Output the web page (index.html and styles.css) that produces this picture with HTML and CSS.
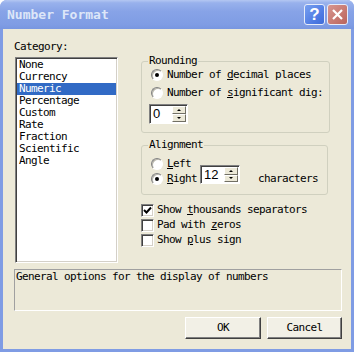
FILE: index.html
```html
<!DOCTYPE html>
<html lang="en">
<head>
  <meta charset="UTF-8" />
  <title>Number Format</title>
  <link rel="stylesheet" href="styles.css">
</head>
<body>
  <div class="window">
    <div class="titlebar">
      <span class="title">Number Format</span>
      <div class="title-buttons">
        <span class="tbtn help">?</span>
        <span class="tbtn close">
          <svg width="13" height="13" viewBox="0 0 13 13"><path d="M2 2 L11 11 M11 2 L2 11" stroke="#fff" stroke-width="2.2" fill="none"/></svg>
        </span>
      </div>
    </div>

    <div class="client">
      <div class="top">
        <div class="category">
          <div class="label">Category:</div>
          <ul class="list">
            <li>None</li>
            <li>Currency</li>
            <li class="selected">Numeric</li>
            <li>Percentage</li>
            <li>Custom</li>
            <li>Rate</li>
            <li>Fraction</li>
            <li>Scientific</li>
            <li>Angle</li>
          </ul>
        </div>

        <div class="options">
          <fieldset class="group rounding">
            <legend>Rounding</legend>
            <div class="radio-row"><span class="radio checked"></span><span>Number of <u>d</u>ecimal places</span></div>
            <div class="radio-row second"><span class="radio"></span><span>Number of <u>s</u>ignificant dig:</span></div>
            <div class="spin small">
              <span class="spin-value">0</span>
              <span class="spin-btns">
                <span class="spin-btn"><i class="arrow up"></i></span>
                <span class="spin-btn"><i class="arrow down"></i></span>
              </span>
            </div>
          </fieldset>

          <fieldset class="group alignment">
            <legend>Alignment</legend>
            <div class="align-row">
              <div class="align-radios">
                <div class="radio-row"><span class="radio"></span><span><u>L</u>eft</span></div>
                <div class="radio-row"><span class="radio checked"></span><span><u>R</u>ight</span></div>
              </div>
              <div class="spin wide">
                <span class="spin-value">12</span>
                <span class="spin-btns">
                  <span class="spin-btn"><i class="arrow up"></i></span>
                  <span class="spin-btn"><i class="arrow down"></i></span>
                </span>
              </div>
              <span class="chars">characters</span>
            </div>
          </fieldset>

          <div class="checks">
            <div class="check-row">
              <span class="checkbox">
                <svg width="9" height="9" viewBox="0 0 9 9"><path d="M1 4 L3.5 6.5 L8 1.5" stroke="#000" stroke-width="2" fill="none"/></svg>
              </span>
              <span>Show <u>t</u>housands separators</span>
            </div>
            <div class="check-row"><span class="checkbox"></span><span>Pad with <u>z</u>eros</span></div>
            <div class="check-row"><span class="checkbox"></span><span>Show <u>p</u>lus sign</span></div>
          </div>
        </div>
      </div>

      <div class="description">General options for the display of numbers</div>

      <div class="buttons">
        <button class="btn ok">OK</button>
        <button class="btn cancel">Cancel</button>
      </div>
    </div>
  </div>
</body>
</html>
```

FILE: styles.css
```css
:root {
  --face: #ece9d8;
  --frame: #7f9ce4;
  --dark: #716f64;
  --select: #316ac5;
  --mono: "DejaVu Sans Mono", "Liberation Mono", monospace;
}

* {
  box-sizing: border-box;
  margin: 0;
  padding: 0;
}

body {
  font-family: var(--mono);
  font-size: 11px;
  letter-spacing: -0.62px;
  line-height: 12px;
  color: #000;
  background: #fff;
}

.window {
  width: 354px;
  height: 352px;
  background: var(--frame);
  border-radius: 7px 7px 0 0;
  display: flex;
  flex-direction: column;
}

.titlebar {
  height: 29px;
  display: flex;
  align-items: center;
  justify-content: space-between;
  padding: 0 6px 0 7px;
  border-radius: 7px 7px 0 0;
  background: linear-gradient(180deg, #b4c7f2 0%, #98b1ec 10%, #87a3e7 40%, #7f9ce4 85%, #7896e0 100%);
}

.title {
  font-weight: bold;
  font-size: 13px;
  letter-spacing: 0;
  color: #dde6f8;
}

.title-buttons {
  display: flex;
  gap: 2px;
}

.tbtn {
  width: 21px;
  height: 21px;
  border: 1px solid #e6ecfa;
  border-radius: 3px;
  display: flex;
  align-items: center;
  justify-content: center;
  color: #fff;
}

.help {
  background: linear-gradient(135deg, #78a0f0 0%, #4b78e2 70%, #3f6cd8 100%);
  font-family: "Liberation Sans", sans-serif;
  font-weight: bold;
  font-size: 17px;
  letter-spacing: 0;
}

.close {
  background: linear-gradient(135deg, #d79690 0%, #c4736b 70%, #b8655e 100%);
}

.client {
  flex: 1;
  margin: 0 3px 3px;
  background: var(--face);
  padding: 12px 9px 0 11px;
  display: flex;
  flex-direction: column;
}

.top {
  display: flex;
  gap: 23px;
}

.category .label {
  height: 12px;
}

.list {
  list-style: none;
  margin: 4px 0 0 1px;
  width: 103px;
  height: 206px;
  background: #fff;
  border: 1px solid;
  border-color: #808080 #fff #fff #808080;
  box-shadow: inset 1px 1px 0 #404040, inset -1px -1px 0 #d4d0c8;
  padding: 1px 1px 0 1px;
}

.list li {
  height: 12px;
  padding-left: 2px;
  white-space: nowrap;
}

.list li.selected {
  background: var(--select);
  color: #fff;
}

.options {
  padding-top: 14px;
  width: 187px;
}

.group {
  border: 1px solid #d0d0bf;
  border-radius: 3px;
  padding: 0 6px 8px;
}

.group legend {
  padding: 0 1px;
  height: 12px;
}

.radio-row {
  display: flex;
  align-items: center;
  height: 16px;
  white-space: nowrap;
}

.radio {
  width: 12px;
  height: 12px;
  border-radius: 50%;
  background: #fff;
  border: 1px solid;
  border-color: #808080 #fff #fff #808080;
  box-shadow: inset 1px 1px 0 #b8b6aa;
  margin: 0 4px 0 3px;
  flex: none;
  display: flex;
  align-items: center;
  justify-content: center;
}

.radio.checked::after {
  content: "";
  width: 4px;
  height: 4px;
  border-radius: 50%;
  background: #000;
}

.rounding .second {
  margin-top: 2px;
}

.spin {
  display: flex;
  background: #fff;
  border: 1px solid;
  border-color: #808080 #fff #fff #808080;
  box-shadow: inset 1px 1px 0 #404040;
  font-family: "Liberation Sans", sans-serif;
  font-size: 13px;
  letter-spacing: 0;
}

.spin.small {
  width: 39px;
  height: 20px;
  margin: 3px 0 0 1px;
}

.spin.wide {
  width: 40px;
  height: 19px;
  margin: 0 0 2px 3px;
}

.spin-value {
  flex: 1;
  padding: 2px 0 0 3px;
  line-height: 14px;
}

.spin-btns {
  width: 15px;
  display: flex;
  flex-direction: column;
  padding: 1px 1px 1px 0;
}

.spin-btn {
  flex: 1;
  background: var(--face);
  border: 1px solid;
  border-color: #fff var(--dark) var(--dark) #fff;
  display: flex;
  align-items: center;
  justify-content: center;
}

.arrow {
  width: 0;
  height: 0;
  border-left: 2px solid transparent;
  border-right: 2px solid transparent;
}

.arrow.up {
  border-bottom: 2px solid #000;
}

.arrow.down {
  border-top: 2px solid #000;
}

.alignment {
  margin-top: 6px;
  padding-bottom: 8px;
}

.align-row {
  display: flex;
  align-items: flex-end;
  padding-top: 6px;
}

.align-radios .radio-row {
  height: 14px;
}

.align-radios .radio-row + .radio-row {
  margin-top: 1px;
}

.chars {
  margin: 0 0 1px 18px;
}

.checks {
  margin-top: 8px;
  display: flex;
  flex-direction: column;
  gap: 1px;
}

.check-row {
  display: flex;
  align-items: center;
  height: 14px;
  white-space: nowrap;
}

.checkbox {
  width: 13px;
  height: 13px;
  background: #fff;
  border: 1px solid;
  border-color: #808080 #fff #fff #808080;
  box-shadow: inset 1px 1px 0 #404040, inset -1px -1px 0 #d4d0c8;
  margin-right: 3px;
  flex: none;
  display: flex;
  align-items: center;
  justify-content: center;
}

.description {
  margin-top: 6px;
  height: 42px;
  border: 1px solid;
  border-color: #a0a0a0 #fff #fff #a0a0a0;
  padding: 1px 0 0 1px;
  white-space: nowrap;
}

.buttons {
  margin-top: 6px;
  display: flex;
  justify-content: flex-end;
  gap: 6px;
}

.btn {
  height: 22px;
  font: inherit;
  letter-spacing: inherit;
  background: #f2f0e6;
  border: 1px solid;
  border-color: #fff #404040 #404040 #fff;
  box-shadow: inset -1px -1px 0 #808080;
  color: #000;
}

.btn.ok {
  width: 76px;
}

.btn.cancel {
  width: 75px;
}
```
